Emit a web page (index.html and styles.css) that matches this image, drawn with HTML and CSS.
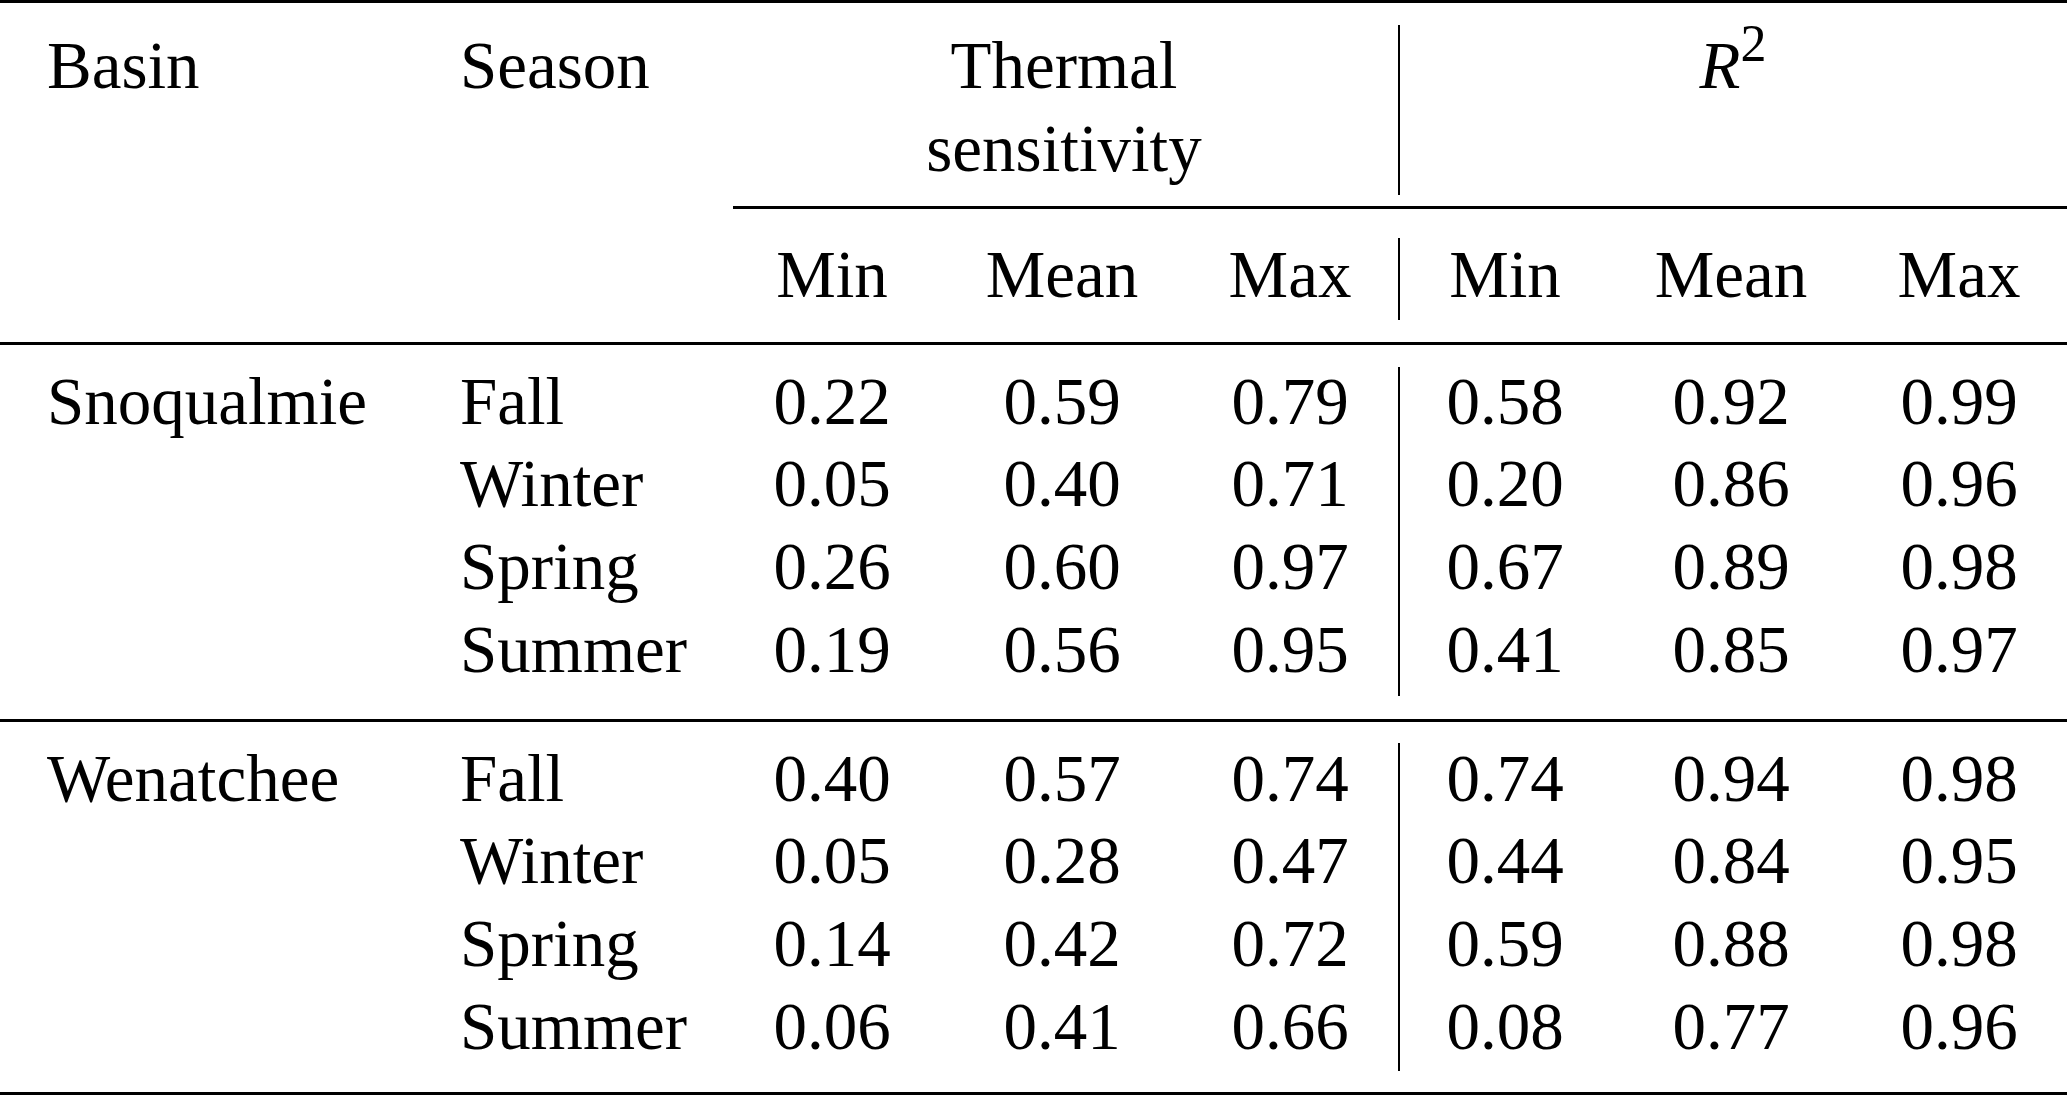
FILE: index.html
```html
<!DOCTYPE html>
<html lang="en">
<head>
<meta charset="utf-8">
<title>Thermal sensitivity table</title>
<link rel="stylesheet" href="styles.css">
</head>
<body>
<div class="tbl">
  <div class="rule"></div>

  <div class="grid head1">
    <div class="vl"></div>
    <div class="lbl">Basin</div>
    <div class="lbl">Season</div>
    <div class="ts">Thermal<br>sensitivity</div>
    <div class="r2"><i>R</i><sup>2</sup></div>
  </div>

  <div class="rule cmid"></div>

  <div class="grid head2">
    <div class="vl"></div>
    <div></div>
    <div></div>
    <div class="n">Min</div>
    <div class="n">Mean</div>
    <div class="n">Max</div>
    <div class="n">Min</div>
    <div class="n">Mean</div>
    <div class="n e">Max</div>
  </div>

  <div class="rule mid1"></div>

  <div class="grid body g1">
    <div class="vl v4"></div>
    <div class="lbl">Snoqualmie</div><div class="lbl">Fall</div>
    <div class="n">0.22</div><div class="n">0.59</div><div class="n">0.79</div>
    <div class="n">0.58</div><div class="n">0.92</div><div class="n e">0.99</div>
    <div></div><div class="lbl">Winter</div>
    <div class="n">0.05</div><div class="n">0.40</div><div class="n">0.71</div>
    <div class="n">0.20</div><div class="n">0.86</div><div class="n e">0.96</div>
    <div></div><div class="lbl">Spring</div>
    <div class="n">0.26</div><div class="n">0.60</div><div class="n">0.97</div>
    <div class="n">0.67</div><div class="n">0.89</div><div class="n e">0.98</div>
    <div></div><div class="lbl">Summer</div>
    <div class="n">0.19</div><div class="n">0.56</div><div class="n">0.95</div>
    <div class="n">0.41</div><div class="n">0.85</div><div class="n e">0.97</div>
  </div>

  <div class="rule mid2"></div>

  <div class="grid body g2">
    <div class="vl v4"></div>
    <div class="lbl">Wenatchee</div><div class="lbl">Fall</div>
    <div class="n">0.40</div><div class="n">0.57</div><div class="n">0.74</div>
    <div class="n">0.74</div><div class="n">0.94</div><div class="n e">0.98</div>
    <div></div><div class="lbl">Winter</div>
    <div class="n">0.05</div><div class="n">0.28</div><div class="n">0.47</div>
    <div class="n">0.44</div><div class="n">0.84</div><div class="n e">0.95</div>
    <div></div><div class="lbl">Spring</div>
    <div class="n">0.14</div><div class="n">0.42</div><div class="n">0.72</div>
    <div class="n">0.59</div><div class="n">0.88</div><div class="n e">0.98</div>
    <div></div><div class="lbl">Summer</div>
    <div class="n">0.06</div><div class="n">0.41</div><div class="n">0.66</div>
    <div class="n">0.08</div><div class="n">0.77</div><div class="n e">0.96</div>
  </div>

  <div class="rule bot"></div>
</div>
</body>
</html>
```

FILE: styles.css
```css
html, body {
  margin: 0;
  padding: 0;
  background: #ffffff;
}

body {
  font-family: "Liberation Serif", "Times New Roman", serif;
  font-size: 67px;
  color: #000000;
}

.tbl {
  width: 2067px;
  overflow: hidden;
}

.rule {
  height: 3px;
  background: #000000;
}

.grid {
  display: grid;
  grid-template-columns: 413px 318px 202px 258px 198px 20px 192px 260px 206px;
  line-height: 82.7px;
}

.lbl {
  padding-left: 47px;
  white-space: nowrap;
}

.n {
  text-align: center;
  white-space: nowrap;
}

.e {
  padding-right: 10px;
}

.ts {
  grid-column: span 3;
  text-align: center;
  padding-left: 8px;
}

.r2 {
  grid-column: span 3;
  text-align: center;
  padding-right: 10px;
  white-space: nowrap;
}

.r2 i {
  font-style: italic;
}

.r2 sup {
  font-size: 52px;
  line-height: 0;
  vertical-align: 27px;
}

.vl {
  grid-column: 6;
  grid-row: 1 / span 1;
  width: 2px;
  justify-self: center;
  background: #000000;
}

.vl.v4 {
  grid-row: 1 / span 4;
}

/* header, first line */
.head1 {
  padding-top: 21px;
  line-height: 83px;
}

.head1 .vl {
  margin-top: 1px;
  margin-bottom: -5px;
}

.cmid {
  margin-top: 16px;
  margin-left: 733px;
}

/* header, second line */
.head2 {
  padding-top: 24px;
}

.head2 .vl {
  margin-top: 5px;
  margin-bottom: -4px;
}

.mid1 {
  margin-top: 26px;
}

.body {
  padding-top: 15px;
}

.g1 .vl {
  margin-top: 7px;
  margin-bottom: -5px;
}

.mid2 {
  margin-top: 28px;
}

.g2 .vl {
  margin-top: 6px;
  margin-bottom: -4px;
}

.bot {
  margin-top: 25px;
}
```
